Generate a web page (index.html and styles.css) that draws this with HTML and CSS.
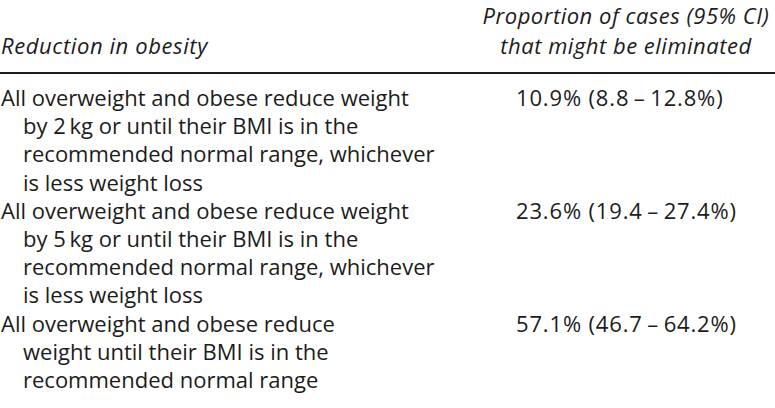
FILE: index.html
```html
<!DOCTYPE html>
<html lang="en">
<head>
<meta charset="utf-8">
<title>Reduction in obesity</title>
<link rel="stylesheet" href="styles.css">
</head>
<body>
<div class="table">
  <div class="head head-left">Reduction in obesity</div>
  <div class="head head-right">Proportion of cases (95% CI)<br>that might be eliminated</div>

  <div class="cell desc first">All overweight and obese reduce weight<br>by 2&#8201;kg or until their BMI is in the<br>recommended normal range, whichever<br>is less weight loss</div>
  <div class="cell value first">10.9% (8.8&#8201;&#8211;&#8201;12.8%)</div>

  <div class="cell desc">All overweight and obese reduce weight<br>by 5&#8201;kg or until their BMI is in the<br>recommended normal range, whichever<br>is less weight loss</div>
  <div class="cell value">23.6% (19.4&#8201;&#8211;&#8201;27.4%)</div>

  <div class="cell desc">All overweight and obese reduce<br>weight until their BMI is in the<br>recommended normal range</div>
  <div class="cell value">57.1% (46.7&#8201;&#8211;&#8201;64.2%)</div>
</div>
</body>
</html>
```

FILE: styles.css
```css
html, body {
  margin: 0;
  padding: 0;
  background: #ffffff;
}

body {
  font-family: "Open Sans", "Noto Sans", "DejaVu Sans", sans-serif;
  font-size: 22px;
  color: #1c1c1c;
  overflow: hidden;
}

.table {
  display: grid;
  grid-template-columns: 480px 1fr;
  width: 775px;
}

.head {
  font-style: italic;
  line-height: 30px;
  padding-bottom: 12px;
  border-bottom: 2px solid #1c1c1c;
}

.head-left {
  align-self: end;
  padding-left: 1px;
  letter-spacing: 0.6px;
}

.head-right {
  text-align: center;
  white-space: nowrap;
  letter-spacing: 0.5px;
  padding-right: 3px;
}

.cell {
  line-height: 28.2px;
  white-space: nowrap;
}

.cell.first {
  padding-top: 9px;
}

.desc {
  padding-left: 23px;
  text-indent: -22px;
}

.value {
  padding-left: 36px;
  letter-spacing: 0.85px;
}
```
